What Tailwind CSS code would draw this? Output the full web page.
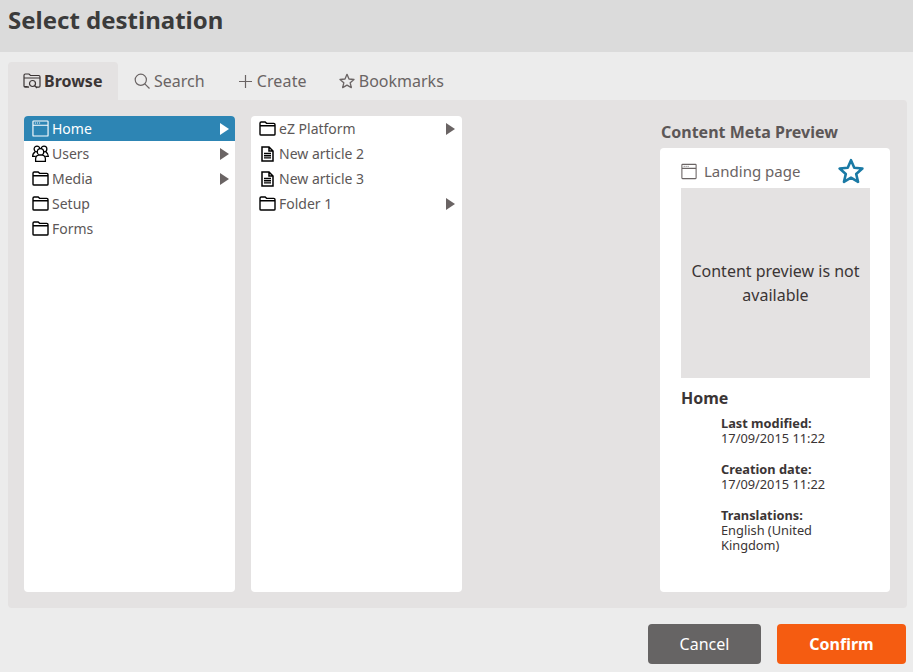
<!DOCTYPE html>
<html lang="en">
<head>
  <meta charset="UTF-8">
  <title>Select destination</title>
  <script src="https://cdn.jsdelivr.net/npm/@tailwindcss/browser@4"></script>
</head>
<body class="w-[913px] h-[672px] overflow-hidden bg-[#ececec] font-['Noto_Sans',sans-serif] text-[#3b3535]">
  <svg class="hidden">
    <symbol id="folder" viewBox="0 0 18 16"><path d="M1 14V2.5C1 1.7 1.5 1 2.3 1H6.5L8 2.5H15.7C16.5 2.500 17 3.200 17 4V14C17 14.600 16.500 15 15.800 15H2.200C1.500 15 1 14.600 1 14ZM1 5H17" fill="none" stroke="currentColor" stroke-width="1.500"/></symbol>
    <symbol id="window" viewBox="0 0 18 18"><path d="M1.700 1H16.300C16.700 1 17 1.300 17 1.700V16.300C17 16.700 16.700 17 16.300 17H1.700C1.300 17 1 16.700 1 16.300V1.700C1 1.300 1.300 1 1.700 1ZM1 5.500H17" fill="none" stroke="currentColor" stroke-width="1.200"/><path d="M3 3.200H4.200M5.200 3.200H6.400M7.400 3.200H8.600" stroke="currentColor" stroke-width="1"/></symbol>
    <symbol id="doc" viewBox="0 0 14 16"><path d="M1.500 1H8.500L12.500 5V15H1.500ZM8.500 1V5H12.500" fill="none" stroke="currentColor" stroke-width="1.500"/><path d="M3.500 7.500H10.500M3.500 9.700H10.500M3.500 11.900H10.500" stroke="currentColor" stroke-width="1.400"/></symbol>
    <symbol id="users" viewBox="0 0 16 16"><circle cx="4.700" cy="3.700" r="2.700" fill="none" stroke="currentColor" stroke-width="1.200"/><circle cx="11.300" cy="3.700" r="2.700" fill="none" stroke="currentColor" stroke-width="1.200"/><path d="M3 6.500C1.300 7.500 .6 8.800 .6 10.800H3.500M13 6.500C14.700 7.500 15.400 8.800 15.400 10.800H12.500" fill="none" stroke="currentColor" stroke-width="1.200"/><circle cx="8" cy="6.500" r="3" fill="#fff" stroke="currentColor" stroke-width="1.200"/><path d="M3.400 15.400V13C3.400 11 5 9.700 6.500 9.500H9.500C11 9.700 12.600 11 12.600 13V15.400Z" fill="#fff" stroke="currentColor" stroke-width="1.200"/></symbol>
    <symbol id="star" viewBox="0 0 24 24"><path d="M12 2L15 9L22.500 9.700L16.800 14.700L18.500 22L12 18.200L5.500 22L7.200 14.700L1.500 9.700L9 9Z" fill="none" stroke="currentColor" stroke-linejoin="round"/></symbol>
    <symbol id="arrow" viewBox="0 0 9 12"><path d="M0 0L9 6L0 12Z" fill="currentColor"/></symbol>
  </svg>

  <header class="h-[52px] bg-[#dbdbdb] pl-2 pt-[2px]">
    <h1 class="text-[24px] leading-[36px] font-bold text-[#3b3b3b]">Select destination</h1>
  </header>

  <nav class="flex h-[38px] mt-[10px] ml-2 text-[16px] text-[#6a6464]">
    <div class="w-[110px] bg-[#e4e2e2] rounded-t flex items-center pl-[15px] gap-[3px] font-bold text-[#3b3535]">
      <svg class="w-[18px] h-[16px]" viewBox="0 0 18 16" fill="none" stroke="currentColor" stroke-width="1.200"><path d="M1 13V2.500C1 1.700 1.500 1 2.300 1H6L7.500 2.500H15.700C16.500 2.500 17 3.200 17 4V13C17 13.700 16.500 14.200 15.800 14.200H13M6 14.200H2.200C1.500 14.200 1 13.700 1 13ZM1 5H17"/><circle cx="9.500" cy="10.500" r="3"/><path d="M11.800 12.800L14 15"/></svg>
      <span>Browse</span>
    </div>
    <div class="flex items-center ml-4 gap-1">
      <svg class="w-4 h-4" viewBox="0 0 16 16" fill="none" stroke="currentColor" stroke-width="1.200"><circle cx="6.800" cy="6.800" r="5.600"/><path d="M10.800 10.800L15.500 15.500"/></svg>
      <span>Search</span>
    </div>
    <div class="flex items-center ml-[34px] gap-[5px]">
      <svg class="w-[13px] h-[13px]" viewBox="0 0 13 13" stroke="currentColor" stroke-width="1.200"><path d="M6.500 0V13M0 6.500H13"/></svg>
      <span class="tracking-[0.15px]">Create</span>
    </div>
    <div class="flex items-center ml-8 gap-1">
      <svg class="w-4 h-4 stroke-[2]"><use href="#star"/></svg>
      <span>Bookmarks</span>
    </div>
  </nav>

  <main class="ml-2 w-[899px] h-[508px] bg-[#e4e2e2] rounded-b rounded-tr flex pt-4 pb-4 pl-4 text-[14px] text-[#5c5757]">
    <ul class="w-[211px] bg-white rounded">
      <li class="h-[25px] flex items-center bg-[#2d85b4] text-white rounded-t pl-2 pr-[6px] gap-[3px]">
        <svg class="w-[17px] h-[17px]"><use href="#window"/></svg><span class="flex-1">Home</span><svg class="w-[9px] h-[12px]"><use href="#arrow"/></svg>
      </li>
      <li class="h-[25px] flex items-center pl-2 pr-[6px] gap-[3px]">
        <svg class="w-[17px] h-[17px] text-black"><use href="#users"/></svg><span class="flex-1">Users</span><svg class="w-[9px] h-[12px] text-[#6a6464]"><use href="#arrow"/></svg>
      </li>
      <li class="h-[25px] flex items-center pl-2 pr-[6px] gap-[3px]">
        <svg class="w-[17px] h-[15px] text-black"><use href="#folder"/></svg><span class="flex-1">Media</span><svg class="w-[9px] h-[12px] text-[#6a6464]"><use href="#arrow"/></svg>
      </li>
      <li class="h-[25px] flex items-center pl-2 pr-[6px] gap-[3px]">
        <svg class="w-[17px] h-[15px] text-black"><use href="#folder"/></svg><span class="flex-1">Setup</span>
      </li>
      <li class="h-[25px] flex items-center pl-2 pr-[6px] gap-[3px]">
        <svg class="w-[17px] h-[15px] text-black"><use href="#folder"/></svg><span class="flex-1">Forms</span>
      </li>
    </ul>

    <ul class="w-[211px] ml-4 bg-white rounded">
      <li class="h-[25px] flex items-center pl-2 pr-[7px] gap-[3px]">
        <svg class="w-[17px] h-[15px] text-black"><use href="#folder"/></svg><span class="flex-1">eZ Platform</span><svg class="w-[9px] h-[12px] text-[#6a6464]"><use href="#arrow"/></svg>
      </li>
      <li class="h-[25px] flex items-center pl-2 pr-[7px] gap-[3px]">
        <svg class="w-[17px] h-[16px] text-black"><use href="#doc"/></svg><span class="flex-1">New article 2</span>
      </li>
      <li class="h-[25px] flex items-center pl-2 pr-[7px] gap-[3px]">
        <svg class="w-[17px] h-[16px] text-black"><use href="#doc"/></svg><span class="flex-1">New article 3</span>
      </li>
      <li class="h-[25px] flex items-center pl-2 pr-[7px] gap-[3px]">
        <svg class="w-[17px] h-[15px] text-black"><use href="#folder"/></svg><span class="flex-1">Folder 1</span><svg class="w-[9px] h-[12px] text-[#6a6464]"><use href="#arrow"/></svg>
      </li>
    </ul>

    <section class="w-[230px] ml-[198px] flex flex-col">
      <h2 class="h-[32px] pl-px pt-[6px] text-[16px] leading-[20px] font-bold text-[#5c5757]">Content Meta Preview</h2>
      <div class="flex-1 bg-white rounded pl-[21px] pr-[20px]">
        <div class="h-[40px] pt-[6px] flex items-center text-[#6a6464]">
          <svg class="w-[16px] h-[17px]"><use href="#window"/></svg>
          <span class="ml-[7px] flex-1 text-[15px]">Landing page</span>
          <svg class="w-[26px] h-[26px] text-[#1a7aa5] stroke-[2.4] mr-[6px]"><use href="#star"/></svg>
        </div>
        <div class="h-[190px] bg-[#e4e2e2] flex items-center justify-center text-center text-[16px] leading-[24px] text-[#3b3535] px-2">Content preview is not available</div>
        <h3 class="mt-[9px] text-[16px] leading-[22px] font-bold text-[#3b3535]">Home</h3>
        <dl class="ml-10 mt-[7px] text-[12.8px] leading-[15px] text-[#3b3535]">
          <dt class="font-bold">Last modified:</dt>
          <dd>17/09/2015 11:22</dd>
          <dt class="font-bold mt-4">Creation date:</dt>
          <dd>17/09/2015 11:22</dd>
          <dt class="font-bold mt-4">Translations:</dt>
          <dd class="w-[110px]">English (United Kingdom)</dd>
        </dl>
      </div>
    </section>
  </main>

  <footer class="flex justify-end mt-4 mr-[7px] gap-4 text-[16px]">
    <button class="w-[113px] h-10 bg-[#666464] text-white rounded">Cancel</button>
    <button class="w-[129px] h-10 bg-[#f55c11] text-white font-bold rounded">Confirm</button>
  </footer>
</body>
</html>
